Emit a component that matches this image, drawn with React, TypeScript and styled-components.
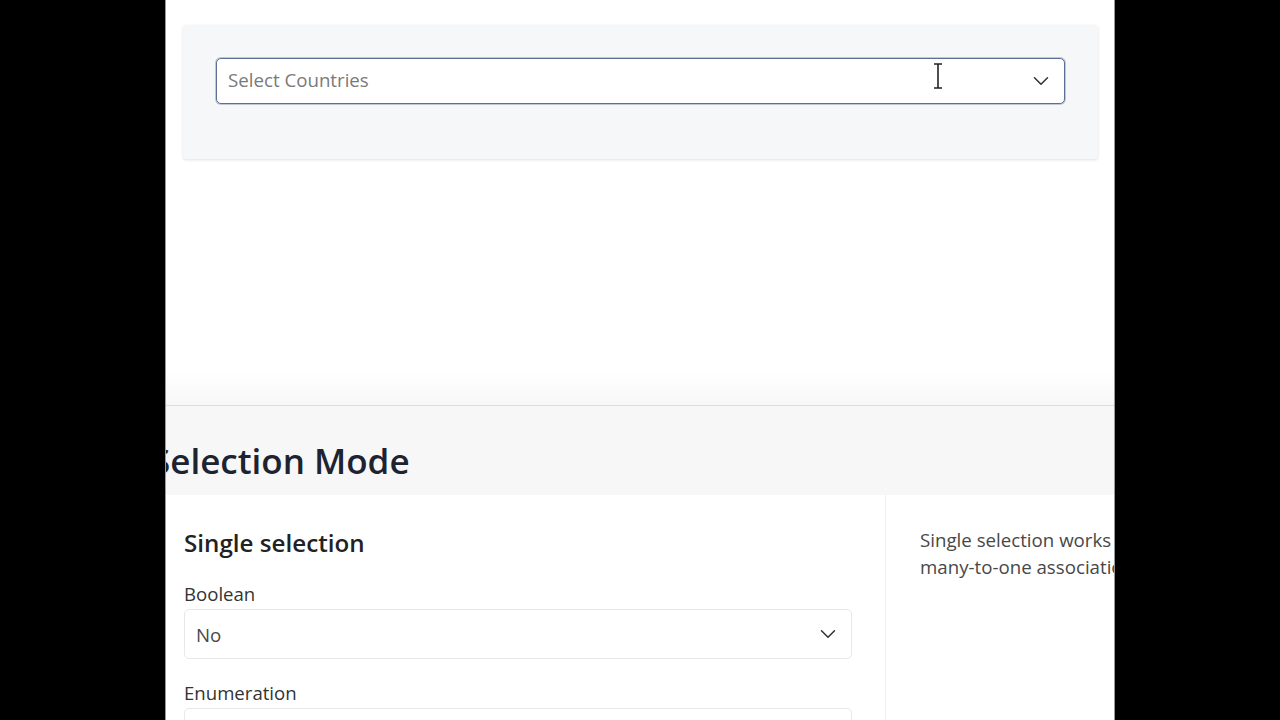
import styled, { createGlobalStyle } from "styled-components";
import { ChevronDown } from "lucide-react";

const GlobalStyle = createGlobalStyle`
  html, body {
    margin: 0;
    padding: 0;
    background: #000;
  }
  body {
    font-family: "Open Sans", "Noto Sans", sans-serif;
  }
`;

/* fundo preto com a "janela" de 950px no centro */
const Stage = styled.div`
  display: flex;
  justify-content: center;
  height: 720px;
  background: #000;
`;

const Viewport = styled.div`
  width: 948px;
  height: 720px;
  background: #fff;
  border-left: 1px solid #9a9a9a;
  border-right: 1px solid #9a9a9a;
  overflow: hidden;
  display: flex;
  flex-direction: column;
`;

const TopArea = styled.div`
  height: 346px;
  padding: 25px 16px 0 17px;
  flex-shrink: 0;
`;

const Card = styled.div`
  background: #f6f7f8;
  border-radius: 3px;
  box-shadow: 0 1px 3px rgba(0, 0, 0, 0.12);
  padding: 33px 33px 55px 33px;
`;

const SelectBox = styled.div<{ $focused?: boolean }>`
  position: relative;
  display: flex;
  align-items: center;
  justify-content: space-between;
  height: ${({ $focused }) => ($focused ? "46px" : "50px")};
  box-sizing: border-box;
  padding: 0 10px 0 11px;
  background: #fff;
  border: 1px solid ${({ $focused }) => ($focused ? "#5d6f94" : "#e8e8e8")};
  border-radius: 5px;
  box-shadow: ${({ $focused }) =>
    $focused ? "0 0 0 1px rgba(93, 111, 148, 0.35)" : "none"};
  font-size: 18.7px;
  color: ${({ $focused }) => ($focused ? "#7a7a7a" : "#484848")};

  svg {
    color: #333;
  }
`;

const SelectValue = styled.span<{ $lift?: boolean }>`
  margin-bottom: ${({ $lift }) => ($lift ? "3px" : "0")};
`;

/* cursor do mouse (I-beam) por cima do campo */
const Caret = styled.svg`
  position: absolute;
  left: 716px;
  top: 4px;
`;

const Band = styled.div`
  height: 34px;
  flex-shrink: 0;
  background: linear-gradient(#fff, #f7f7f7);
  border-bottom: 1px solid #dcdcdc;
`;

const HeadingBar = styled.div`
  height: 89px;
  flex-shrink: 0;
  box-sizing: border-box;
  background: #f7f7f7;
  padding-top: 32px;
  overflow: hidden;
`;

const SectionTitle = styled.h1`
  margin: 0 0 0 -15px;
  font-size: 35px;
  font-weight: 600;
  line-height: 1.3;
  color: #1d2330;
  white-space: nowrap;
`;

const Columns = styled.div`
  display: flex;
  flex: 1;
  min-height: 0;
`;

const MainColumn = styled.div`
  width: 720px;
  flex-shrink: 0;
  box-sizing: border-box;
  padding: 32px 33px 0 18px;
  border-right: 1px solid #f0f0f0;
`;

const SubTitle = styled.h2`
  margin: 0 0 22px;
  font-size: 24.2px;
  font-weight: 600;
  line-height: 1.3;
  color: #222;
`;

const Field = styled.div`
  display: flex;
  flex-direction: column;
  gap: 2px;
  margin-bottom: 20px;
`;

const Label = styled.label`
  font-size: 18.6px;
  line-height: 27px;
  color: #333;
`;

const SideColumn = styled.div`
  flex: 1;
  padding: 31px 0 0 34px;
  white-space: nowrap;
`;

const Note = styled.p`
  margin: 0;
  font-size: 18.7px;
  line-height: 27px;
  color: #484848;
`;

export default function App() {
  return (
    <>
      <GlobalStyle />
      <Stage>
        <Viewport>
          <TopArea>
            <Card>
              <SelectBox $focused>
                <SelectValue $lift>Select Countries</SelectValue>
                <ChevronDown size={26} strokeWidth={1.4} />
                <Caret width="10" height="26" viewBox="0 0 10 26">
                  <path
                    d="M1 1h8M5 1v24M1 25h8"
                    stroke="#222"
                    strokeWidth="1.6"
                    fill="none"
                  />
                </Caret>
              </SelectBox>
            </Card>
          </TopArea>

          <Band />
          <HeadingBar>
            <SectionTitle>Selection Mode</SectionTitle>
          </HeadingBar>

          <Columns>
            <MainColumn>
              <SubTitle>Single selection</SubTitle>
              <Field>
                <Label>Boolean</Label>
                <SelectBox>
                  <SelectValue>No</SelectValue>
                  <ChevronDown size={26} strokeWidth={1.4} />
                </SelectBox>
              </Field>
              <Field>
                <Label>Enumeration</Label>
                <SelectBox>
                  <SelectValue></SelectValue>
                  <ChevronDown size={26} strokeWidth={1.4} />
                </SelectBox>
              </Field>
            </MainColumn>
            <SideColumn>
              <Note>
                Single selection works with boolean, enumeration and
                <br />
                many-to-one associations.
              </Note>
            </SideColumn>
          </Columns>
        </Viewport>
      </Stage>
    </>
  );
}
